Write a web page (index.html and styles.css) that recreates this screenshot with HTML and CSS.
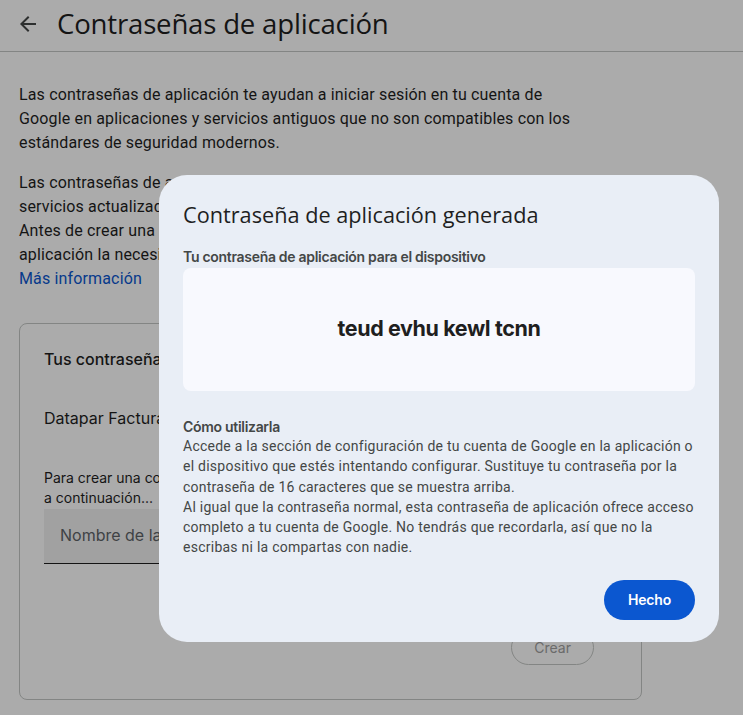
FILE: index.html
```html
<!DOCTYPE html>
<html lang="es">
<head>
<meta charset="utf-8">
<title>Contraseñas de aplicación</title>
<link rel="stylesheet" href="styles.css">
</head>
<body>
<header class="topbar">
  <svg class="back" width="24" height="24" viewBox="0 0 24 24"><path d="M20 11H7.83l5.59-5.59L12 4l-8 8 8 8 1.41-1.41L7.83 13H20v-2z" fill="#444746"/></svg>
  <h1 class="page-title">Contraseñas de aplicación</h1>
</header>
<main class="content">
  <p class="intro">Las contraseñas de aplicación te ayudan a iniciar sesión en tu cuenta de Google en aplicaciones y servicios antiguos que no son compatibles con los estándares de seguridad modernos.</p>
  <p class="intro lines">Las contraseñas de aplicación no son necesarias en la mayoría de las aplicaciones y<br>servicios actualizados, y no se recomienda usarlas.<br>Antes de crear una contraseña de aplicación, comprueba si tu<br>aplicación la necesita para iniciar sesión.<br><a class="link" href="#">Más información</a></p>
  <section class="card">
    <h2 class="card-title">Tus contraseñas de aplicación</h2>
    <div class="app-item">Datapar Facturación</div>
    <p class="hint">Para crear una contraseña nueva específica de una aplicación, escribe un nombre<br>a continuación...</p>
    <div class="field">Nombre de la aplicación</div>
    <div class="card-actions"><span class="btn-outline">Crear</span></div>
  </section>
</main>
<div class="scrim"></div>
<div class="dialog">
  <h2 class="dialog-title">Contraseña de aplicación generada</h2>
  <div class="label">Tu contraseña de aplicación para el dispositivo</div>
  <div class="pw-box">teud evhu kewl tcnn</div>
  <div class="howto">
    <div class="howto-title">Cómo utilizarla</div>
    <p>Accede a la sección de configuración de tu cuenta de Google en la aplicación o el dispositivo que estés intentando configurar. Sustituye tu contraseña por la contraseña de 16 caracteres que se muestra arriba.<br>Al igual que la contraseña normal, esta contraseña de aplicación ofrece acceso completo a tu cuenta de Google. No tendrás que recordarla, así que no la escribas ni la compartas con nadie.</p>
  </div>
  <div class="dialog-actions"><span class="btn-filled">Hecho</span></div>
</div>
</body>
</html>
```
FILE: styles.css
```css
* { box-sizing: border-box; }
html, body { margin: 0; padding: 0; }
body {
  background: #ffffff;
  font-family: Roboto, "Liberation Sans", sans-serif;
  color: #1f1f1f;
  width: 743px;
  height: 715px;
  overflow: hidden;
}
.topbar {
  display: flex;
  align-items: center;
  height: 52px;
  border-bottom: 1px solid #c4c7c5;
  padding-left: 16px;
}
.back { flex: none; margin-right: 17px; margin-top: -3px; }
.page-title {
  margin: 0;
  font-family: "Open Sans", Roboto, sans-serif;
  font-weight: 400;
  font-size: 27.6px;
  letter-spacing: -0.2px;
  margin-top: -6px;
  white-space: nowrap;
}
.content { padding: 31px 19px 0 19px; }
.intro {
  margin: 0 0 16px 0;
  width: 570px;
  font-size: 16px;
  line-height: 24px;
  letter-spacing: 0.15px;
  color: #1f1f1f;
}
.intro.lines { white-space: nowrap; }
.link { color: #0b57d0; text-decoration: none; }
.card {
  margin-top: 32px;
  width: 623px;
  height: 377px;
  border: 1px solid #c4c7c5;
  border-radius: 8px;
  padding: 24px 24px 0 24px;
  font-family: Inter, Roboto, sans-serif;
}
.card-title { margin: 0; font-size: 16px; font-weight: 500; line-height: 22px; white-space: nowrap; }
.app-item { margin-top: 37px; font-size: 16px; line-height: 22px; white-space: nowrap; }
.hint { margin: 39px 0 0 0; font-size: 14px; line-height: 20px; color: #1f1f1f; white-space: nowrap; }
.field {
  margin-top: 1px;
  height: 55px;
  background: #f0f1f1;
  border-bottom: 1px solid #1f1f1f;
  padding: 16px;
  font-size: 16px;
  color: #5f6368;
  white-space: nowrap;
}
.card-actions { display: flex; justify-content: flex-end; margin-top: 66px; padding-right: 23px; }
.btn-outline {
  border: 1px solid #c4c7c5;
  border-radius: 20px;
  padding: 8px 22px;
  font-size: 14px;
  color: #a0a0a0;
}
.scrim {
  position: fixed;
  inset: 0;
  background: rgba(0, 0, 0, 0.33);
}
.dialog {
  position: fixed;
  left: 159px;
  top: 175px;
  width: 560px;
  height: 467px;
  background: #e9eef6;
  border-radius: 28px;
  padding: 24px 24px 0 24px;
  font-family: Roboto, "Liberation Sans", sans-serif;
}
.dialog-title {
  margin: 0;
  font-family: "Open Sans", Roboto, sans-serif;
  font-weight: 400;
  font-size: 21.7px;
  line-height: 32px;
  color: #1f1f1f;
  white-space: nowrap;
}
.label {
  margin-top: 17px;
  font-family: Inter, Roboto, sans-serif;
  font-size: 14px;
  font-weight: 600;
  color: #444746;
  letter-spacing: -0.3px;
  line-height: 18px;
}
.pw-box {
  margin-top: 2px;
  height: 123px;
  border-radius: 8px;
  background: #f8f9fe;
  display: flex;
  align-items: center;
  justify-content: center;
  font-family: Inter, Roboto, sans-serif;
  font-weight: 700;
  font-size: 21.5px;
  color: #1f1f1f;
  letter-spacing: -0.4px;
  padding-bottom: 3px;
}
.howto { margin-top: 27px; color: #444746; font-size: 14px; }
.howto-title { font-family: Inter, Roboto, sans-serif; font-weight: 600; line-height: 18px; letter-spacing: -0.3px; }
.howto p { margin: 0; line-height: 20.3px; letter-spacing: 0.25px; }
.dialog-actions { display: flex; justify-content: flex-end; margin-top: 22px; }
.btn-filled {
  background: #0b57d0;
  color: #ffffff;
  border-radius: 20px;
  width: 91px;
  height: 40px;
  display: flex;
  align-items: center;
  justify-content: center;
  font-family: Inter, Roboto, sans-serif;
  font-weight: 600;
  font-size: 14px;
  letter-spacing: -0.2px;
}
```
